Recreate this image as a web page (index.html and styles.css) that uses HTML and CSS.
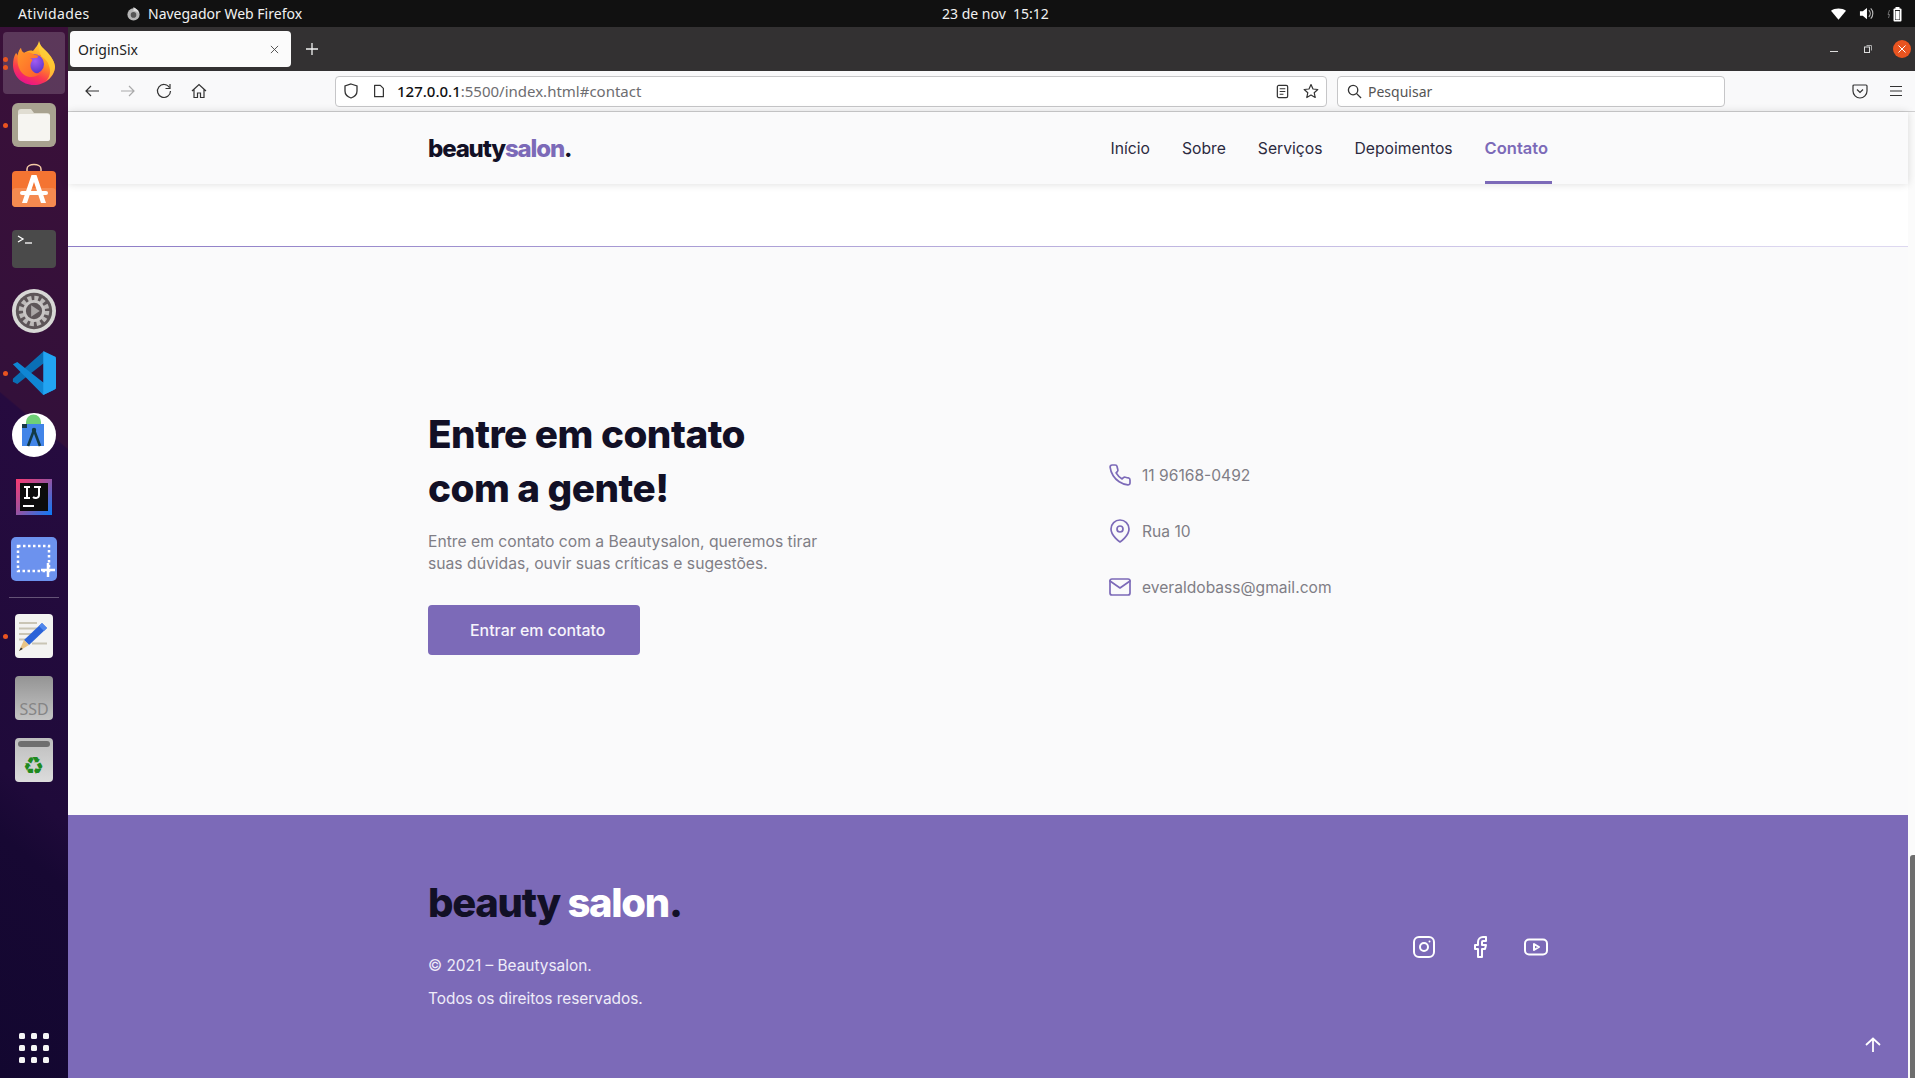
FILE: index.html
```html
<!DOCTYPE html>
<html lang="pt-BR">
<head>
<meta charset="utf-8">
<title>OriginSix</title>
<link rel="stylesheet" href="styles.css">
</head>
<body>
<div class="desktop">
  <div class="topbar">
    <span class="activities">Atividades</span>
    <svg class="app-glyph" viewBox="0 0 16 16"><circle cx="8" cy="9" r="6.5" fill="#b5b5b5"/><path d="M8 1c3 2 5 3 6 7-2-2-4-3-6-3z" fill="#ddd"/><circle cx="8" cy="9.5" r="3" fill="#555"/></svg>
    <span class="app-name">Navegador Web Firefox</span>
    <span class="clock">23 de nov&nbsp;&nbsp;15:12</span>
    <div class="tray">
      <svg class="tray-wifi" viewBox="0 0 16 12"><path d="M0 2.500C4-.8 12-.8 16 2.500L8 12z" fill="#fff"/></svg>
      <svg class="tray-vol" viewBox="0 0 16 16"><path d="M1 5.500h3L8.500 2v12L4 10.500H1z" fill="#fff"/><path d="M10.500 4.500c2 2 2 5 0 7M12.500 2.500c3 3 3 8 0 11" fill="none" stroke="#bbb" stroke-width="1.200"/></svg>
      <svg class="tray-bat" viewBox="0 0 16 16"><path d="M2.500 4 1 8.500h1.500L1.500 12" fill="none" stroke="#888" stroke-width=".8"/><rect x="6.500" y="2.500" width="8" height="13" rx="1" fill="#fff"/><rect x="8.500" y="1" width="4" height="2" fill="#fff"/><rect x="8" y="4" width="5" height="10" fill="#222"/><rect x="8.500" y="5" width="4" height="8.500" fill="#fff"/></svg>
    </div>
  </div>
  <div class="workspace">
    <nav class="dock">
      <div class="dock-slot dock-slot-active">
        <span class="run-dots"><i></i><i></i></span>
        <svg class="dock-icon icon-firefox" viewBox="0 0 42 44">
          <defs>
            <linearGradient id="fx1" x1="0.8" y1="0" x2="0.35" y2="1"><stop offset="0" stop-color="#ffe14a"/><stop offset=".45" stop-color="#ff9a1f"/><stop offset=".75" stop-color="#fb3a4e"/><stop offset="1" stop-color="#e8128c"/></linearGradient>
            <linearGradient id="fx3" x1="0" y1="0" x2="1" y2="1"><stop offset="0" stop-color="#ff9a2a"/><stop offset="1" stop-color="#ff5a2c"/></linearGradient>
            <radialGradient id="fx2" cx=".55" cy=".35" r=".75"><stop offset="0" stop-color="#a25cf2"/><stop offset="1" stop-color="#4b2ec0"/></radialGradient>
          </defs>
          <path d="M26 0c1 5 4 7 8 11 5 5 8 11 8 15-.5 10-10 18-21 18C9 44 0 35 0 24c0-5 1-9 3-12 1 1 2 2 2 3 0-3 1-6 3-8 0 2 1 4 3 5 3-2 6-3 9-2 2-3 5-5 6-10z" fill="url(#fx1)"/>
          <circle cx="21" cy="23" r="10" fill="url(#fx2)"/>
          <path d="M8 7c0 2 1 4 3 5 3-1 6-1 9 1 3 1 6 2 9 2-4-3-3 0-5 2-3-.5-4 1-7 0 2 1 3 2 2 3-4 5 0 13 8 13-3 2-6 3-9 3C9 36 3 26 5 15c0-3 1-6 3-8z" fill="url(#fx3)"/>
          <path d="M26 0c1 5 4 7 8 11 5 5 8 11 8 15-.5 6-4 11-9 14 4-4 5-10 3-15-1-5-5-8-8-10-2-5-3-10-2-15z" fill="#ffd23a" opacity=".75"/>
        </svg>
      </div>
      <div class="dock-slot">
        <span class="run-dots"><i></i></span>
        <svg class="dock-icon" viewBox="0 0 44 44"><rect width="44" height="44" rx="6" fill="#a8a290"/><path d="M6 9a3 3 0 0 1 3-3h10l3 4h13a3 3 0 0 1 3 3v22a3 3 0 0 1-3 3H9a3 3 0 0 1-3-3z" fill="#e0ddd2"/><rect x="6" y="11" width="32" height="27" rx="2" fill="#f6f5f1"/></svg>
      </div>
      <div class="dock-slot">
        <svg class="dock-icon" viewBox="0 4 44 44"><path d="M15 12V8c0-6 14-6 14 0v4" fill="none" stroke="#f4c9a5" stroke-width="1.500"/><rect y="10" width="44" height="36" rx="4" fill="#f47432"/><rect y="27" width="44" height="19" rx="4" fill="#f58a50"/><path d="M19.500 14h5L34 42h-5l-7-21-7 21h-5z" fill="#fff"/><rect x="8" y="30" width="28" height="4" rx="2" fill="#fff"/></svg>
      </div>
      <div class="dock-slot">
        <svg class="dock-icon" viewBox="0 0 44 44"><rect y="3" width="44" height="38" rx="4" fill="#4a4a4a"/><path d="M6 9l5 3-5 3" fill="none" stroke="#fff" stroke-width="1.300"/><path d="M13 16h7" stroke="#fff" stroke-width="1.300"/></svg>
      </div>
      <div class="dock-slot">
        <svg class="dock-icon" viewBox="0 0 46 46"><circle cx="23" cy="23" r="23" fill="#d8d8d6"/><circle cx="23" cy="23" r="19" fill="#5d5558"/><circle cx="23" cy="23" r="13" fill="none" stroke="#bdbab9" stroke-width="6" stroke-dasharray="4 2.800"/><circle cx="23" cy="23" r="10" fill="none" stroke="#c8c5c4" stroke-width="3"/><path d="M20 17l9 6-9 6z" fill="#aaa6a6"/></svg>
      </div>
      <div class="dock-slot">
        <span class="run-dots"><i></i></span>
        <svg class="dock-icon" viewBox="0 0 100 100"><path d="M2 63 70 2l30 12v14H72L12 75 2 70z" fill="#0a6fb5"/><path d="M2 30l10-5 60 47h28v14L71 100z" fill="#0f86d4"/><path d="M71 0l25 12q4 2 4 6v64q0 4-4 6l-25 12z" fill="#22a4f2"/></svg>
      </div>
      <div class="dock-slot">
        <svg class="dock-icon" viewBox="0 0 44 44"><circle cx="22" cy="22" r="22" fill="#fff"/><path d="M14 9a7.500 7.500 0 0 1 15 0v5H14z" fill="#6fcf77"/><rect x="10" y="11" width="22" height="22" fill="#4285e8"/><rect x="10" y="11" width="5" height="4" fill="#17394a"/><path d="M22 17 16 33M22 17l6 16" stroke="#123a46" stroke-width="2.600" fill="none"/><circle cx="22" cy="17" r="2.200" fill="#123a46"/></svg>
      </div>
      <div class="dock-slot">
        <svg class="dock-icon icon-ij" viewBox="0 0 36 36"><defs><linearGradient id="ij" x1="0" y1="0" x2="1" y2="1"><stop offset="0" stop-color="#fc3a70"/><stop offset=".45" stop-color="#a2509c"/><stop offset="1" stop-color="#087cfa"/></linearGradient></defs><rect width="36" height="36" fill="url(#ij)"/><rect x="4" y="4" width="28" height="28" fill="#0c0c0c"/><path d="M8 8h6M11 8v11M8 19h6M18 8h7M23 8v8c0 3-4 4-6 2" stroke="#fff" stroke-width="2" fill="none"/><rect x="7" y="26" width="11" height="2" fill="#fff"/></svg>
      </div>
      <div class="dock-slot">
        <svg class="dock-icon icon-shot" viewBox="0 0 46 44"><rect width="46" height="44" rx="5" fill="#6c92ee"/><rect x="7" y="9" width="31" height="25" fill="none" stroke="#fff" stroke-width="2.500" stroke-dasharray="2.500 2.500"/><path d="M37 26v14M30 33h14" stroke="#fff" stroke-width="2.500"/></svg>
      </div>
      <div class="dock-sep"></div>
      <div class="dock-slot">
        <span class="run-dots"><i></i></span>
        <svg class="dock-icon icon-tall" viewBox="0 0 38 44"><rect width="38" height="44" rx="4" fill="#f3f3f1"/><path d="M4 9h18M4 14.500h18M4 20h15M4 25.500h11M17 29.500h15" stroke="#c9c5b5" stroke-width="2"/><path d="M27 9l5 5-18 17-5-5z" fill="#2a62d8"/><path d="M27 9l5 5-3 3-5-5z" fill="#4f86ec"/><path d="M9 26l5 5-10 6z" fill="#e8c486"/><path d="M6 33.500l1.800 1.500L4 37z" fill="#333"/></svg>
      </div>
      <div class="dock-slot">
        <svg class="dock-icon icon-tall" viewBox="0 0 38 44"><defs><linearGradient id="ssd" x1="0" y1="0" x2="0" y2="1"><stop offset="0" stop-color="#949494"/><stop offset="1" stop-color="#c4c4c4"/></linearGradient></defs><rect width="38" height="44" rx="4" fill="url(#ssd)"/><text class="ssd-label" x="19" y="39" text-anchor="middle">SSD</text></svg>
      </div>
      <div class="dock-slot">
        <svg class="dock-icon icon-tall" viewBox="0 0 38 44"><defs><linearGradient id="tr" x1="0" y1="0" x2="0" y2="1"><stop offset="0" stop-color="#bdbdbd"/><stop offset="1" stop-color="#dcdcdc"/></linearGradient></defs><rect width="38" height="44" rx="4" fill="url(#tr)"/><rect x="3" y="3" width="32" height="6" rx="3" fill="#6f6f6f"/><text class="recycle" x="18.500" y="36" text-anchor="middle">♻</text></svg>
      </div>
      <div class="dock-grid"><i></i><i></i><i></i><i></i><i></i><i></i><i></i><i></i><i></i></div>
    </nav>
    <div class="browser">
      <div class="tabbar">
        <div class="tab">
          <span class="tab-title">OriginSix</span>
          <svg class="tab-close" viewBox="0 0 10 10"><path d="M1 1l8 8M9 1l-8 8" stroke="#444" stroke-width="1"/></svg>
        </div>
        <svg class="tab-new" viewBox="0 0 12 12"><path d="M6 0v12M0 6h12" stroke="#f2f2f2" stroke-width="1.300"/></svg>
        <div class="winctl">
          <svg class="win-min" viewBox="0 0 8 8"><path d="M0 6.500h8" stroke="#ddd" stroke-width="1"/></svg>
          <svg class="win-max" viewBox="0 0 8 8"><rect x=".5" y="2" width="5" height="5.500" fill="none" stroke="#ddd"/><path d="M2.500 .5h5v5" fill="none" stroke="#aaa"/></svg>
          <span class="win-close"><svg viewBox="0 0 10 10"><path d="M1.500 1.500l7 7M8.500 1.500l-7 7" stroke="#fff" stroke-width="1"/></svg></span>
        </div>
      </div>
      <div class="toolbar">
        <svg class="tool tool-first" viewBox="0 0 16 16"><path d="M15 8H2M7 3 2 8l5 5" fill="none" stroke="#333" stroke-width="1.200"/></svg>
        <svg class="tool" viewBox="0 0 16 16"><path d="M1 8h13M9 3l5 5-5 5" fill="none" stroke="#aaa" stroke-width="1.200"/></svg>
        <svg class="tool" viewBox="0 0 16 16"><path d="M13.500 4.500A6.500 6.500 0 1 0 14.500 8" fill="none" stroke="#333" stroke-width="1.200"/><path d="M14 1v4.500H9.500" fill="none" stroke="#333" stroke-width="1.200"/></svg>
        <svg class="tool" viewBox="0 0 16 16"><path d="M1 8l7-6.500L15 8M3 6.500V14.500h3.500V10h3v4.500H13V6.500" fill="none" stroke="#333" stroke-width="1.200"/></svg>
        <div class="urlbar">
          <svg class="ub-shield" viewBox="0 0 16 16"><path d="M8 1l6 2v5c0 3.500-3 6-6 7-3-1-6-3.500-6-7V3z" fill="none" stroke="#333" stroke-width="1.300"/></svg>
          <svg class="ub-page" viewBox="0 0 16 16"><path d="M3 1.500h6.500L13 5v9.500H3z" fill="none" stroke="#333" stroke-width="1.400" stroke-linejoin="round"/></svg>
          <span class="url"><b>127.0.0.1</b>:5500/index.html#contact</span>
          <svg class="ub-reader" viewBox="0 0 16 16"><rect x="2.500" y="1.500" width="11" height="13" rx="1.500" fill="none" stroke="#333" stroke-width="1.300"/><path d="M5 5h6M5 8h6M5 11h4" stroke="#333" stroke-width="1.100"/></svg>
          <svg class="ub-star" viewBox="0 0 16 16"><path d="M8 1.500l2 4.500 4.800.5-3.600 3.200 1 4.800L8 12.100l-4.200 2.400 1-4.800L1.200 6.500 6 6z" fill="none" stroke="#333" stroke-width="1.200" stroke-linejoin="round"/></svg>
        </div>
        <div class="searchbar">
          <svg class="sb-icon" viewBox="0 0 16 16"><circle cx="6.500" cy="6.500" r="5" fill="none" stroke="#333" stroke-width="1.400"/><path d="M10 10l5 5" stroke="#333" stroke-width="1.400"/></svg>
          <span class="sb-text">Pesquisar</span>
        </div>
        <svg class="tool tool-pocket" viewBox="0 0 16 16"><path d="M2 2h12a1 1 0 0 1 1 1v5a7 7 0 0 1-14 0V3a1 1 0 0 1 1-1z" fill="none" stroke="#333" stroke-width="1.200"/><path d="M5 6.500l3 3 3-3" fill="none" stroke="#333" stroke-width="1.200"/></svg>
        <svg class="tool tool-menu" viewBox="0 0 16 16"><path d="M2 3.500h12M2 8h12M2 12.500h12" stroke="#333" stroke-width="1.200"/></svg>
      </div>
      <div class="viewport">
        <div class="page">
          <header class="site-header">
            <div class="container header-inner">
              <a class="logo">beauty<span class="accent">salon</span>.</a>
              <ul class="menu">
                <li>Início</li>
                <li>Sobre</li>
                <li>Serviços</li>
                <li>Depoimentos</li>
                <li class="menu-active">Contato</li>
              </ul>
            </div>
          </header>
          <div class="band"></div>
          <section class="contact">
            <div class="container contact-grid">
              <div class="contact-lead">
                <h2>Entre em contato<br>com a gente!</h2>
                <p>Entre em contato com a Beautysalon, queremos tirar suas dúvidas, ouvir suas críticas e sugestões.</p>
                <a class="button">Entrar em contato</a>
              </div>
              <ul class="contact-list">
                <li><svg viewBox="0 0 24 24"><path d="M22 16.900v3a2 2 0 0 1-2.200 2 19.800 19.800 0 0 1-8.600-3.100 19.500 19.500 0 0 1-6-6A19.800 19.800 0 0 1 2.100 4.200 2 2 0 0 1 4.100 2h3a2 2 0 0 1 2 1.700c.1 1 .4 1.900.7 2.800a2 2 0 0 1-.5 2.100L8.100 9.900a16 16 0 0 0 6 6l1.300-1.300a2 2 0 0 1 2.100-.4c.9.300 1.800.6 2.800.7a2 2 0 0 1 1.700 2z"/></svg><span>11 96168-0492</span></li>
                <li><svg viewBox="0 0 24 24"><path d="M21 10c0 7-9 13-9 13s-9-6-9-13a9 9 0 0 1 18 0z"/><circle cx="12" cy="10" r="3"/></svg><span>Rua 10</span></li>
                <li><svg viewBox="0 0 24 24"><rect x="2" y="4" width="20" height="16" rx="2"/><path d="M22 6l-10 7L2 6"/></svg><span>everaldobass@gmail.com</span></li>
              </ul>
            </div>
          </section>
          <footer class="site-footer">
            <div class="container footer-inner">
              <div class="footer-brand">
                <div class="footer-logo">beauty <span class="light">salon</span>.</div>
                <p>© 2021 – Beautysalon.</p>
                <p>Todos os direitos reservados.</p>
              </div>
              <ul class="social">
                <li><svg viewBox="0 0 24 24"><rect x="2" y="2" width="20" height="20" rx="5"/><circle cx="12" cy="12" r="4"/><path d="M17.500 6.500h.01"/></svg></li>
                <li><svg viewBox="0 0 24 24"><path d="M18 2h-3a5 5 0 0 0-5 5v3H7v4h3v8h4v-8h3l1-4h-4V7a1 1 0 0 1 1-1h3z"/></svg></li>
                <li><svg viewBox="0 0 24 24"><rect x="1" y="4.500" width="22" height="15" rx="4"/><path d="M10 9l5 3-5 3z"/></svg></li>
              </ul>
            </div>
            <a class="back-top"><svg viewBox="0 0 16 16"><path d="M8 15V1.500M1 8l7-6.500L15 8"/></svg></a>
          </footer>
        </div>
        <div class="scrollbar"><div class="scroll-thumb"></div></div>
      </div>
    </div>
  </div>
</div>
</body>
</html>
```
FILE: styles.css
```css
* { box-sizing: border-box; }
html, body { margin: 0; height: 100%; overflow: hidden; }
body { font-family: "Inter", "Noto Sans", sans-serif; color: #121026; }
ul { list-style: none; margin: 0; padding: 0; }
p, h2 { margin: 0; }

.desktop { height: 100vh; display: flex; flex-direction: column; }

/* GNOME top bar */
.topbar {
  height: 27px; flex: none; background: #111;
  display: flex; align-items: center;
  padding-left: 18px; padding-right: 12px;
  font-family: "Noto Sans", sans-serif; font-size: 14px; color: #f1f1f1;
}
.activities { width: 108px; letter-spacing: .35px; }
.app-glyph { width: 15px; height: 15px; }
.app-name { margin-left: 7px; width: 794px; }
.clock { width: 105px; font-size: 14px; white-space: nowrap; }
.tray { margin-left: auto; display: flex; align-items: center; gap: 13px; }
.tray-wifi { width: 15px; height: 12px; }
.tray-vol { width: 15px; height: 15px; }
.tray-bat { width: 16px; height: 16px; }

.workspace { flex: 1; display: flex; min-height: 0; }

/* Dock */
.dock {
  width: 68px; flex: none; padding-top: 5px; padding-bottom: 15px;
  display: flex; flex-direction: column; align-items: center;
  background: linear-gradient(220deg, #3b1039 0, #33103a 38%, #260b3f 38.2%, #1f0a3a 72%, #170833 78%, #130730 100%);
}
.dock-slot {
  position: relative; width: 62px; height: 62px; flex: none;
  display: flex; align-items: center; justify-content: center;
  border-radius: 4px;
}
.dock-slot-active { background: rgba(255,255,255,.17); }
.dock-icon { width: 44px; height: 44px; display: block; overflow: visible; }
.icon-firefox { width: 42px; height: 44px; }
.icon-ij { width: 36px; height: 36px; }
.icon-shot { width: 46px; height: 44px; }
.icon-tall { width: 38px; height: 44px; }
.ssd-label { font-family: "Noto Sans", sans-serif; font-size: 16px; fill: #858585; }
.recycle { font-family: "DejaVu Sans", sans-serif; font-size: 24px; fill: #1e8a1e; }
.run-dots {
  position: absolute; left: 0; top: 0; bottom: 0;
  display: flex; flex-direction: column; justify-content: center; gap: 3px;
}
.run-dots i { width: 5px; height: 5px; border-radius: 50%; background: #e95420; display: block; }
.dock-sep { width: 50px; height: 1px; margin: 7px 0; flex: none; background: rgba(255,255,255,.3); }
.dock-grid {
  margin-top: auto; width: 30px; display: grid;
  grid-template-columns: repeat(3, 6px); justify-content: space-between; row-gap: 6px;
}
.dock-grid i { width: 6px; height: 6px; border-radius: 1.5px; background: #f5f5f5; display: block; }

/* Browser chrome */
.browser { flex: 1; min-width: 0; display: flex; flex-direction: column; }
.tabbar { height: 44px; flex: none; background: #333132; display: flex; align-items: center; padding-left: 2px; padding-right: 4px; }
.tab {
  width: 221px; height: 36px; background: #fbfbfb; border-radius: 4px;
  display: flex; align-items: center; justify-content: space-between;
  padding: 0 12px 0 8px; font-family: "Noto Sans", sans-serif; font-size: 14px; color: #222;
}
.tab-close { width: 9px; height: 9px; }
.tab-new { width: 12px; height: 12px; margin-left: 15px; }
.winctl { margin-left: auto; display: flex; align-items: center; }
.win-min { width: 8px; height: 8px; }
.win-max { width: 8px; height: 8px; margin-left: 26px; }
.win-close { width: 18px; height: 18px; margin-left: 21px; border-radius: 50%; background: #e95420; display: flex; align-items: center; justify-content: center; }
.win-close svg { width: 10px; height: 10px; }

.toolbar {
  height: 41px; flex: none; background: #f9f9fa; border-bottom: 1px solid #cfcfd0;
  display: flex; align-items: center;
  font-family: "Noto Sans", sans-serif; font-size: 14px; color: #222;
}
.tool { width: 16px; height: 16px; flex: none; margin-right: 20px; }
.tool-first { margin-left: 16px; }
.tool:nth-child(3) { margin-right: 19px; }
.tool:nth-child(4) { margin-right: 0; }
.urlbar {
  width: 992px; height: 31px; margin-left: 128px;
  background: #fff; border: 1px solid #c6c6c8; border-radius: 4px;
  display: flex; align-items: center; padding: 0 7px 0 7px;
}
.ub-shield { width: 16px; height: 16px; flex: none; }
.ub-page { width: 14px; height: 14px; flex: none; margin-left: 13px; }
.url { margin-left: 11px; color: #6d6d70; flex: 1; font-size: 15px; }
.url b { font-weight: 500; color: #111; }
.ub-reader { width: 15px; height: 15px; flex: none; margin-right: 13px; }
.ub-star { width: 16px; height: 16px; flex: none; }
.searchbar {
  width: 388px; height: 31px; margin-left: 10px;
  background: #fff; border: 1px solid #c6c6c8; border-radius: 4px;
  display: flex; align-items: center; padding-left: 9px;
}
.sb-icon { width: 15px; height: 15px; flex: none; }
.sb-text { margin-left: 6px; color: #555; }
.tool-pocket { margin-left: 127px; margin-right: 20px; }
.tool-menu { margin-right: 0; }

/* Viewport */
.viewport { flex: 1; min-height: 0; display: flex; background: #fff; }
.page { flex: 1; min-width: 0; display: flex; flex-direction: column; background: #fafafb; }
.scrollbar { width: 7px; flex: none; display: flex; flex-direction: column; background: #fbfbfb; }
.scroll-thumb { margin-top: auto; height: 223px; margin-left: 2px; background: #6e6e6e; border-radius: 3px 0 0 0; }

.container { width: 1120px; margin: 0 auto; }
.site-header { height: 72px; flex: none; background: #fafafb; box-shadow: 0 0 8px rgba(0,0,0,.14); position: relative; }
.header-inner { height: 100%; display: flex; align-items: center; justify-content: space-between; }
.logo { font-size: 24px; font-weight: 800; letter-spacing: -1.150px; color: #121026; }
.accent { color: #7c6ab8; }
.menu { display: flex; gap: 32px; height: 100%; font-size: 15.700px; font-weight: 400; color: #2c2a3f; }
.menu li { display: flex; align-items: center; padding-top: 3px; padding-right: 4px; margin-right: -4px; border-bottom: 3px solid transparent; }
.menu .menu-active { color: #7c6ab8; font-weight: 600; font-size: 16.500px; border-bottom-color: #7c6ab8; }

.band { height: 63px; flex: none; background: #fff; border-bottom: 1px solid; border-image: linear-gradient(90deg, #8d7cc6, #ddd8f0 95%) 1; }

.contact { height: 568px; flex: none; display: flex; align-items: center; }
.contact-grid { display: grid; grid-template-columns: 680px 1fr; align-items: center; }
h2 { font-size: 38.700px; line-height: 54px; font-weight: 800; letter-spacing: -.5px; color: #121026; }
.contact-lead p { margin-top: 16px; width: 410px; font-size: 15.700px; line-height: 22px; color: #807e86; }
.button {
  display: inline-flex; align-items: center; height: 50px; margin-top: 30px; width: 212px; padding-left: 42px;
  background: #7c6ab8; color: #f6f4fb; border-radius: 4px; font-size: 15.900px; font-weight: 500;
}
.contact-list { display: flex; flex-direction: column; gap: 32px; color: #807e86; font-size: 15.600px; }
.contact-list li { display: flex; align-items: center; gap: 10px; height: 24px; }
.contact-list svg { width: 24px; height: 24px; fill: none; stroke: #7c6ab8; stroke-width: 1.700; stroke-linejoin: round; stroke-linecap: round; }

.site-footer { flex: 1; min-height: 0; position: relative; background: #7c6ab8; padding-top: 64px; color: #efecf8; }
.footer-inner { display: flex; justify-content: space-between; align-items: flex-start; }
.footer-logo { font-size: 40px; line-height: 48px; font-weight: 800; letter-spacing: -1.300px; color: #121026; margin-bottom: 28px; }
.light { color: #fff; }
.footer-brand p { font-size: 15.400px; line-height: 21px; margin-bottom: 12px; }
.social { display: flex; gap: 32px; margin-top: 56px; }
.social svg { width: 24px; height: 24px; display: block; fill: none; stroke: #fff; stroke-width: 2; stroke-linejoin: round; stroke-linecap: round; }
.back-top { position: absolute; right: 27px; bottom: 25px; width: 16px; height: 16px; }
.back-top svg { width: 16px; height: 16px; display: block; fill: none; stroke: #fff; stroke-width: 1.800; }
```
